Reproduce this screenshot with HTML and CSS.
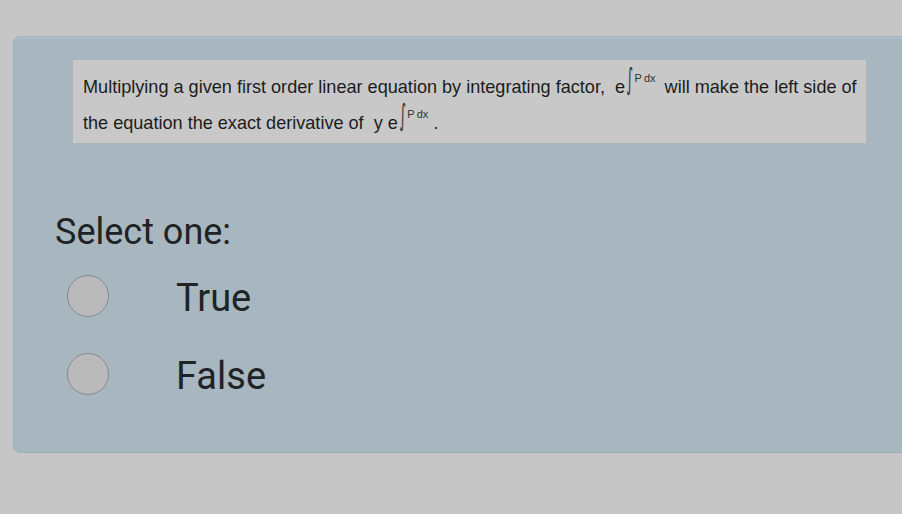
FILE: index.html
```html
<!DOCTYPE html>
<html>
<head>
<meta charset="utf-8">
<link rel="stylesheet" href="styles.css">
</head>
<body>
<div class="page">
  <div class="card">
    <div class="qtext">
      <p class="line">Multiplying a given first order linear equation by integrating factor, <span class="expr">e<span class="int">∫</span><span class="sup">P<span class="dx">dx</span></span></span> will make the left side of</p>
      <p class="line">the equation the exact derivative of <span class="expr">y e<span class="int">∫</span><span class="sup">P<span class="dx">dx</span></span></span><span class="period">.</span></p>
    </div>
    <div class="prompt">Select one:</div>
    <div class="answers">
      <label class="option"><span class="radio"></span><span class="opt-label">True</span></label>
      <label class="option"><span class="radio"></span><span class="opt-label">False</span></label>
    </div>
  </div>
</div>
</body>
</html>
```
FILE: styles.css
```css
html, body {
  margin: 0;
  padding: 0;
  background: #c6c6c6;
  overflow: hidden;
}
.page {
  width: 902px;
  height: 514px;
  padding: 36px 0 0 13px;
  box-sizing: border-box;
  overflow: hidden;
}
.card {
  width: 920px;
  height: 417px;
  box-sizing: border-box;
  background: #a8b7bf;
  border: 1px solid #9bb2bb;
  border-radius: 7px;
  box-shadow: inset 0 1px 0 #b3c3ca;
  padding: 23px 0 0 59px;
}
.qtext {
  width: 793px;
  height: 83px;
  box-sizing: border-box;
  background: #c8c8c8;
  padding: 14px 0 0 10px;
  font-family: "Liberation Sans", Arial, sans-serif;
  font-size: 18.1px;
  color: #1c1c1c;
}
.line {
  margin: 0;
  height: 36px;
  line-height: 26px;
  white-space: nowrap;
}
.expr {
  margin-left: 5px;
  margin-right: 4px;
}
.int {
  display: inline-block;
  font-family: "DejaVu Sans", sans-serif;
  font-size: 22px;
  line-height: 0;
  transform: scale(0.6, 1.35);
  position: relative;
  top: -6px;
  margin: 0 -2px 0 -1px;
  color: #333;
}
.sup {
  position: relative;
  top: -11px;
  font-size: 11px;
  color: #333;
  margin-left: 1px;
}
.dx {
  margin-left: 2px;
}
.period {
  margin-left: 1px;
}
.prompt {
  margin: 69px 0 0 -18px;
  font-family: Roboto, "Noto Sans", sans-serif;
  font-size: 36px;
  line-height: 40px;
  color: #202326;
}
.answers {
  display: flex;
  flex-direction: column;
  gap: 36px;
  margin-top: 23px;
  margin-left: -6px;
}
.option {
  display: flex;
  align-items: center;
  height: 42px;
  font-family: Roboto, "Noto Sans", sans-serif;
  font-size: 38px;
  color: #202326;
}
.radio {
  width: 40px;
  height: 40px;
  border-radius: 50%;
  background: #bababa;
  border: 1px solid #868a8d;
  flex: none;
}
.opt-label {
  margin-left: 67px;
  line-height: 42px;
  padding-top: 3px;
}
```
